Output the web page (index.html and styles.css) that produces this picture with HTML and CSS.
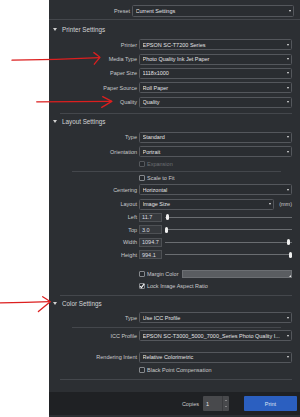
FILE: index.html
```html
<!DOCTYPE html>
<html lang="en">
<head>
<meta charset="utf-8">
<title>Print Settings</title>
<link rel="stylesheet" href="styles.css">
</head>
<body>
<div class="page">
  <div class="gutter"></div>
  <div class="panel">
    <div class="row preset-row">
      <span class="label preset-label">Preset</span>
      <div class="select"><span class="val">Current Settings</span><span class="caret"></span></div>
    </div>
    <div class="rule full"></div>

    <div class="group-head"><span class="tri"></span>Printer Settings</div>
    <div class="row first">
      <span class="label">Printer</span>
      <div class="select"><span class="val">EPSON SC-T7200 Series</span><span class="caret"></span></div>
    </div>
    <div class="row">
      <span class="label">Media Type</span>
      <div class="select"><span class="val">Photo Quality Ink Jet Paper</span><span class="caret"></span></div>
    </div>
    <div class="row">
      <span class="label">Paper Size</span>
      <div class="select"><span class="val">1118x1000</span><span class="caret"></span></div>
    </div>
    <div class="row">
      <span class="label">Paper Source</span>
      <div class="select"><span class="val">Roll Paper</span><span class="caret"></span></div>
    </div>
    <div class="row">
      <span class="label">Quality</span>
      <div class="select"><span class="val">Quality</span><span class="caret"></span></div>
    </div>
    <div class="rule major r-printer"></div>

    <div class="group-head">
      <span class="tri"></span>Layout Settings</div>
    <div class="row first">
      <span class="label">Type</span>
      <div class="select"><span class="val">Standard</span><span class="caret"></span></div>
    </div>
    <div class="row">
      <span class="label">Orientation</span>
      <div class="select"><span class="val">Portrait</span><span class="caret"></span></div>
    </div>
    <div class="check-row disabled expansion">
      <span class="box"></span><span>Expansion</span>
    </div>
    <div class="rule minor r-expansion"></div>
    <div class="check-row scale">
      <span class="box"></span><span>Scale to Fit</span>
    </div>
    <div class="row centering">
      <span class="label">Centering</span>
      <div class="select"><span class="val">Horizontal</span><span class="caret"></span></div>
    </div>
    <div class="row">
      <span class="label">Layout</span>
      <div class="select"><span class="val">Image Size</span><span class="caret"></span></div>
      <span class="unit">(mm)</span>
    </div>
    <div class="row slide first-slide">
      <span class="label">Left</span>
      <span class="num">11.7</span>
      <div class="track"><span class="thumb" style="left: 1.6%"></span></div>
    </div>
    <div class="row slide">
      <span class="label">Top</span>
      <span class="num">3.0</span>
      <div class="track"><span class="thumb" style="left: 0.8%"></span></div>
    </div>
    <div class="row slide">
      <span class="label">Width</span>
      <span class="num">1094.7</span>
      <div class="track"><span class="thumb" style="left: 97.6%"></span></div>
    </div>
    <div class="row slide">
      <span class="label">Height</span>
      <span class="num">994.1</span>
      <div class="track"><span class="thumb" style="left: 99.2%"></span></div>
    </div>
    <div class="check-row margin-row">
      <span class="box"></span><span>Margin Color</span>
      <span class="swatch"><span class="corner"></span></span>
    </div>
    <div class="check-row lock">
      <span class="box checked"><svg viewBox="0 0 6 6" width="6" height="6"><path d="M1 3.2 L2.4 4.6 L5.2 0.8" fill="none" stroke="#f2f2f2" stroke-width="1.2"/></svg></span><span>Lock Image Aspect Ratio</span>
    </div>
    <div class="rule major r-layout"></div>

    <div class="group-head"><span class="tri"></span>Color Settings</div>
    <div class="row first color-type">
      <span class="label">Type</span>
      <div class="select"><span class="val">Use ICC Profile</span><span class="caret"></span></div>
    </div>
    <div class="rule minor r-type"></div>
    <div class="row icc">
      <span class="label">ICC Profile</span>
      <div class="select"><span class="val">EPSON SC-T3000_5000_7000_Series Photo Quality I...</span><span class="caret"></span></div>
    </div>
    <div class="row intent">
      <span class="label">Rendering Intent</span>
      <div class="select"><span class="val">Relative Colorimetric</span><span class="caret"></span></div>
    </div>
    <div class="check-row bpc">
      <span class="box"></span><span>Black Point Compensation</span>
    </div>
    <div class="rule major r-color"></div>

    <div class="footer">
      <span class="copies-label">Copies</span>
      <div class="copies">
        <span class="copies-val">1</span>
        <span class="spin"><span class="up"></span><span class="down"></span></span>
      </div>
      <button class="print">Print</button>
    </div>
  </div>

  <svg class="marks" width="300" height="417" viewBox="0 0 300 417">
    <g fill="none" stroke="#dc1f1f" stroke-width="1.3" stroke-linecap="round" stroke-linejoin="round">
      <path d="M12 60.2 Q56 59.6 99.5 57.6"/>
      <path d="M93.8 52.6 Q97.5 55 100 57.4 Q97 60.8 94.3 64.2"/>
      <path d="M36.7 101.8 Q74 101.6 111.6 101.4"/>
      <path d="M102.7 96.6 Q107.5 99 111.8 101.4 Q106.5 104.6 101.7 107.4"/>
      <path d="M0 302.8 Q25 302.4 50 301.7"/>
      <path d="M42.7 296.7 Q46.6 299 50.2 301.7 Q44.5 306.5 38.4 311.6"/>
    </g>
  </svg>
</div>
</body>
</html>
```

FILE: styles.css
```css
* {
  box-sizing: border-box;
  margin: 0;
  padding: 0;
}

html,
body {
  width: 300px;
  height: 417px;
  overflow: hidden;
  background: #ffffff;
}

body {
  font-family: "Liberation Sans", Arial, sans-serif;
  font-size: 5.5px;
  color: #c9cacc;
}

.page {
  position: relative;
  display: flex;
  width: 300px;
  height: 417px;
}

.gutter {
  width: 49px;
  flex: none;
  background: #ffffff;
}

.panel {
  flex: 1;
  display: flex;
  flex-direction: column;
  background: #2c2f33;
  padding-top: 5px;
}

/* rows */
.row {
  display: flex;
  align-items: center;
  height: 11px;
  padding-right: 8px;
  margin-top: 3.35px;
  flex: none;
}

.row.first {
  margin-top: 5px;
}

.label {
  flex: none;
  width: 88px;
  margin-right: 2px;
  text-align: right;
  white-space: nowrap;
}

.preset-row {
  height: 12px;
  margin-top: 0;
  padding-right: 6px;
}

.preset-label {
  width: 81px;
}

.select {
  flex: 1;
  height: 100%;
  display: flex;
  align-items: center;
  padding-left: 2.5px;
  border: 1px solid #54575c;
  border-radius: 1.5px;
  background: #2a2d31;
  color: #e3e4e6;
  white-space: nowrap;
  overflow: hidden;
}

.val {
  flex: 1;
  overflow: hidden;
}

.caret {
  flex: none;
  width: 0;
  height: 0;
  margin: 0 2.5px 0 2px;
  border-left: 1.5px solid transparent;
  border-right: 1.5px solid transparent;
  border-top: 2px solid #e6e6e6;
}

.unit {
  flex: none;
  margin-left: 5px;
  color: #c9cacc;
}

/* group headings */
.group-head {
  flex: none;
  height: 10px;
  display: flex;
  align-items: center;
  padding-left: 4px;
  margin-top: 4.3px;
  font-size: 6.3px;
  color: #d3d4d6;
}

.tri {
  flex: none;
  width: 0;
  height: 0;
  margin-right: 5px;
  border-left: 2px solid transparent;
  border-right: 2px solid transparent;
  border-top: 3px solid #d0d0d0;
}

/* rules */
.rule {
  flex: none;
  height: 1px;
  background: #44474c;
}

.rule.full {
  margin-top: 2px;
}

.rule.major {
  margin-left: 11px;
  margin-right: 8px;
}

.rule.minor {
  margin-left: 23px;
  margin-right: 19px;
}

.r-printer { margin-top: 5px; }
.r-printer + .group-head { margin-top: 3px; }
.r-expansion { margin-top: 3px; }
.r-layout { margin-top: 4.6px; }
.r-layout + .group-head { margin-top: 3px; }
.r-type { margin-top: 3.5px; }
.r-color { margin-top: 5.3px; }

/* checkboxes */
.check-row {
  flex: none;
  display: flex;
  align-items: center;
  height: 8px;
  padding-left: 90px;
  padding-right: 8px;
  color: #c9cacc;
  white-space: nowrap;
}

.box {
  flex: none;
  width: 6px;
  height: 6px;
  margin-right: 2px;
  border: 1px solid #85888c;
  border-radius: 1px;
  background: #272a2e;
  display: flex;
  align-items: center;
  justify-content: center;
}

.box svg {
  display: block;
  margin: -1px;
}

.check-row.disabled {
  color: #6c6f73;
}

.check-row.disabled .box {
  border-color: #55585c;
}

.expansion { margin-top: 2.7px; }
.scale { margin-top: 1.8px; }
.row.centering { margin-top: 2.9px; }
.row.first-slide { margin-top: 3.2px; }
.margin-row { margin-top: 10.8px; }
.lock { margin-top: 3.7px; }
.row.color-type { margin-top: 3.9px; }
.row.icc { margin-top: 2.3px; }
.row.intent { margin-top: 10.5px; }
.bpc { margin-top: 3.5px; }

.swatch {
  flex: 1;
  height: 8px;
  margin-left: 4px;
  border: 1px solid #6c6f73;
  background: #5a5d61;
  display: flex;
  align-items: flex-end;
  justify-content: flex-end;
}

.corner {
  width: 0;
  height: 0;
  border-left: 2px solid transparent;
  border-bottom: 2px solid #e8e8e8;
}

/* sliders */
.row.slide {
  height: 9px;
  margin-top: 3.5px;
}

.row.slide.first-slide {
  margin-top: 3.2px;
}

.num {
  flex: none;
  width: 23px;
  height: 9px;
  display: flex;
  align-items: center;
  padding-left: 2px;
  border: 1px solid #4e5155;
  background: #36393d;
  color: #dcdde0;
}

.track {
  flex: 1;
  position: relative;
  height: 1px;
  margin-left: 3px;
  background: #6a6d71;
}

.thumb {
  position: absolute;
  top: -2.5px;
  width: 3px;
  height: 6px;
  margin-left: -1.5px;
  border-radius: 1.5px;
  background: #f0f0f0;
}

/* footer */
.footer {
  flex: none;
  height: 23px;
  margin-top: 11.7px;
  display: flex;
  align-items: center;
  justify-content: flex-end;
  padding-right: 3px;
  background: #1f2124;
}

.copies-label {
  margin-right: 4px;
  color: #c9cacc;
}

.copies {
  display: flex;
  width: 26px;
  height: 15px;
  background: #48494c;
  border-radius: 1px;
}

.copies-val {
  flex: 1;
  display: flex;
  align-items: center;
  padding-left: 3px;
  color: #e6e6e6;
}

.spin {
  flex: none;
  width: 7px;
  display: flex;
  flex-direction: column;
  align-items: center;
  justify-content: space-around;
  padding: 2px 0;
  border-left: 1px solid #3a3b3e;
}

.up,
.down {
  width: 0;
  height: 0;
  border-left: 1px solid transparent;
  border-right: 1px solid transparent;
}

.up {
  border-bottom: 1.5px solid #bdbdbd;
}

.down {
  border-top: 1.5px solid #bdbdbd;
}

.print {
  width: 53px;
  height: 15px;
  margin-left: 15px;
  border: none;
  border-radius: 1px;
  background: #2b5fc0;
  color: #dfe6f4;
  font-family: "Liberation Sans", Arial, sans-serif;
  font-size: 5.5px;
}

/* red annotation arrows drawn over the screenshot */
.marks {
  position: absolute;
  left: 0;
  top: 0;
  pointer-events: none;
}
```
